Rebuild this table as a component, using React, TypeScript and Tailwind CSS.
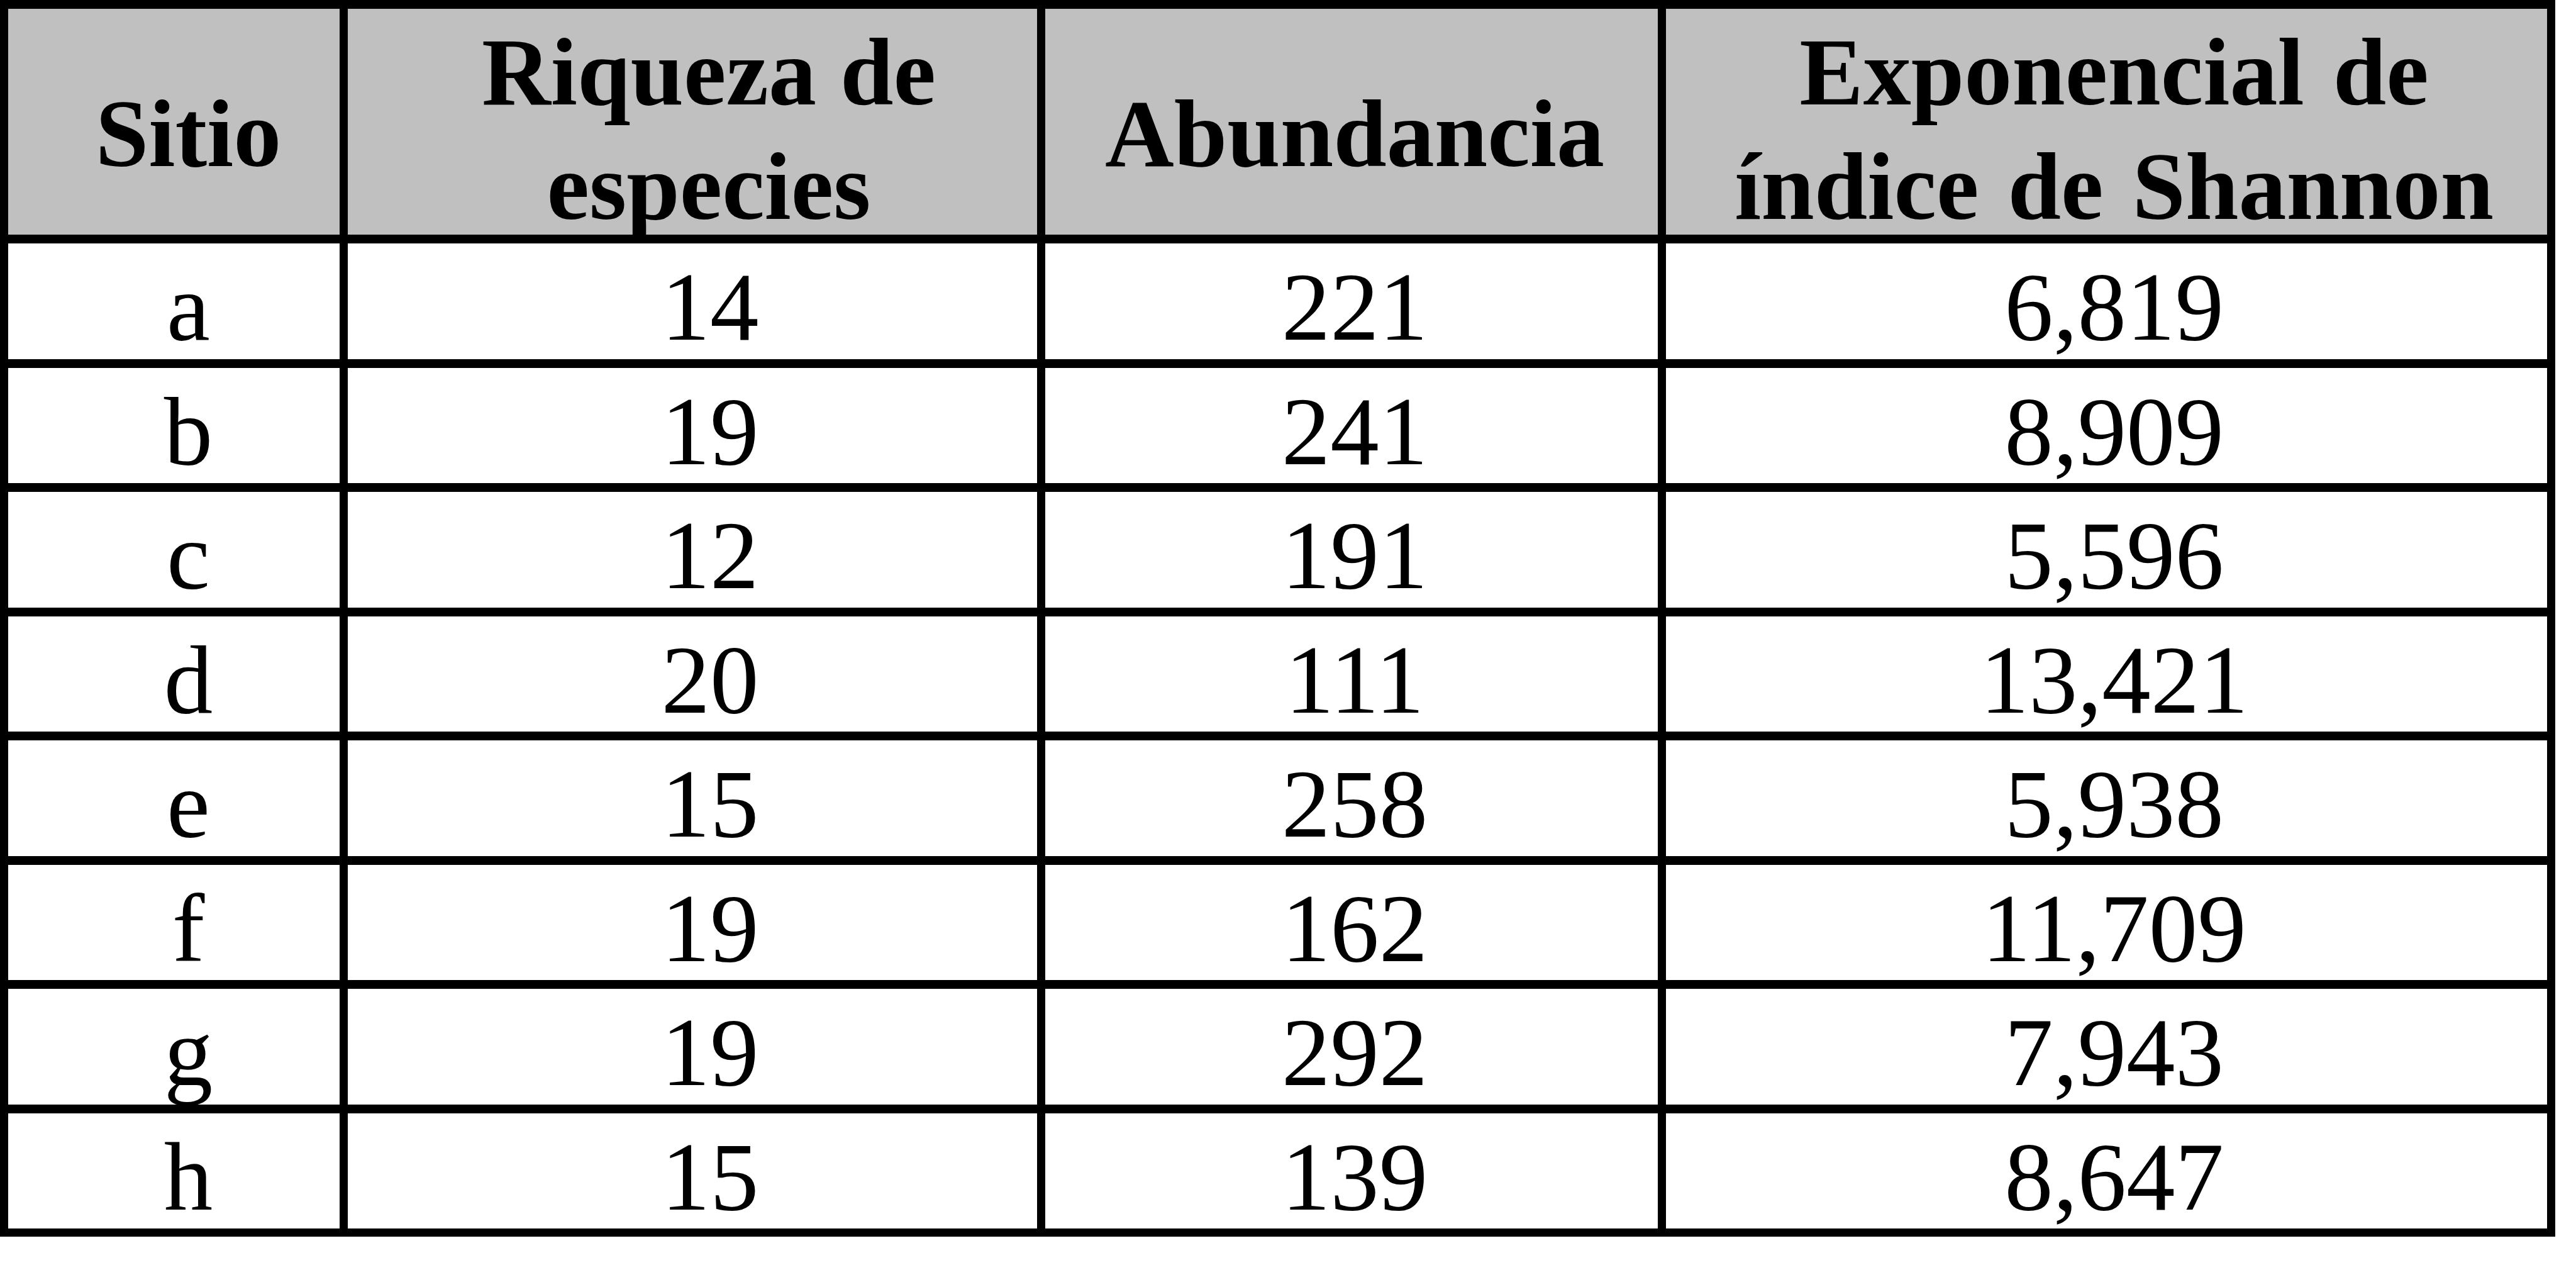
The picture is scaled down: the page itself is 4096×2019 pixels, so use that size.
const rows: [string, string, string, string][] = [
	["a", "14", "221", "6,819"],
	["b", "19", "241", "8,909"],
	["c", "12", "191", "5,596"],
	["d", "20", "111", "13,421"],
	["e", "15", "258", "5,938"],
	["f", "19", "162", "11,709"],
	["g", "19", "292", "7,943"],
	["h", "15", "139", "8,647"],
];

const pads = ["pl-[46px]", "pl-[56px]", "pl-[10px]", "pl-[24px]"];

export default function App() {
	return (
		<div className="min-h-screen bg-white font-['Liberation_Serif','Times_New_Roman',serif] text-black">
			<div className="grid w-fit grid-cols-[527px_1096px_974px_1401px] grid-rows-[359px_repeat(8,183.5px)] gap-x-[13px] gap-y-[14px] bg-black p-[13px] pt-[14px]">
				{/* header */}
				<div className="flex items-center justify-center bg-[#c0c0c0] pl-[46px] pt-[38px] text-[152px] font-bold leading-[182px]">
					Sitio
				</div>
				<div className="flex items-center justify-center bg-[#c0c0c0] pl-[52px] pt-[24px] text-center text-[152px] font-bold leading-[182px]">
					Riqueza de
					<br />
					especies
				</div>
				<div className="flex items-center justify-center bg-[#c0c0c0] pl-[10px] pt-[38px] text-[152px] font-bold leading-[182px]">
					Abundancia
				</div>
				<div className="flex items-center justify-center bg-[#c0c0c0] pl-[24px] pt-[24px] text-center text-[152px] font-bold leading-[182px] [word-spacing:8px]">
					Exponencial de
					<br />
					índice de Shannon
				</div>

				{rows.map((r) =>
					r.map((v, i) => (
						<div
							key={r[0] + i}
							className={`flex items-center justify-center bg-white pt-[20px] text-[155px] leading-none ${pads[i]}`}
						>
							{v}
						</div>
					)),
				)}
			</div>
		</div>
	);
}
